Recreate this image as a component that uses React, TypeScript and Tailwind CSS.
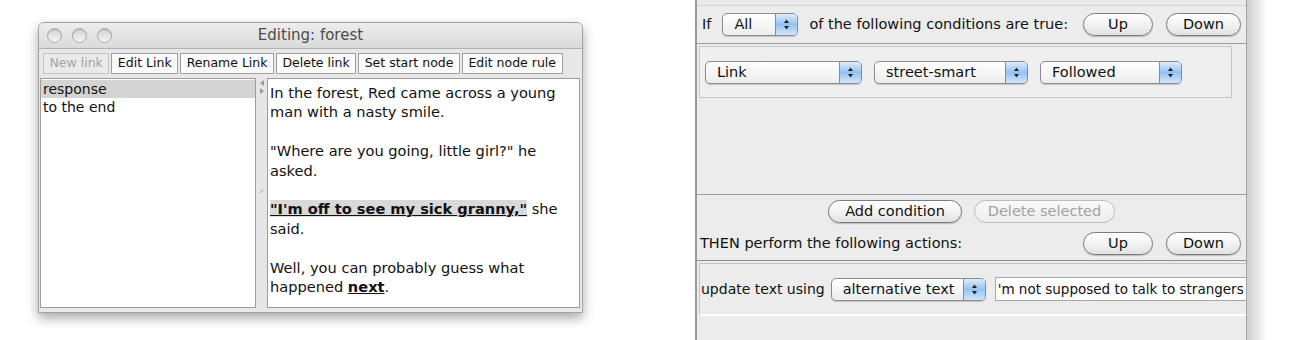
import React from 'react';

const font = "font-['DejaVu_Sans',sans-serif]";

function Light() {
  return (
    <div className="w-[15px] h-[15px] rounded-full border border-[#a9a9a9] bg-gradient-to-b from-[#cfcfcf] via-[#e6e6e6] to-[#f4f4f4] shadow-[inset_0_1px_1px_rgba(0,0,0,0.15)]" />
  );
}

function ToolButton({ label, disabled }: { label: string; disabled?: boolean }) {
  return (
    <div
      className={
        'h-[21px] px-[5.5px] flex items-center border text-[12.5px] leading-none whitespace-nowrap ' +
        (disabled
          ? 'border-[#c4c4c4] bg-[#eaeaea] text-[#a3a3a3]'
          : 'border-[#a0a0a0] bg-[#fbfbfb] text-[#111]')
      }
    >
      {label}
    </div>
  );
}

function AquaSelect({ label, width }: { label: string; width: string }) {
  return (
    <div
      className={
        width +
        ' h-[23px] shrink-0 flex rounded-[5px] border border-[#8c8c8c] bg-gradient-to-b from-white to-[#ececec] shadow-[0_1px_1px_rgba(0,0,0,0.18)]'
      }
    >
      <div className="flex-1 pl-[11px] flex items-center text-[14.5px] text-[#111] leading-none whitespace-nowrap">{label}</div>
      <div className="w-[22px] rounded-r-[4px] border-l border-[#8c8c8c] bg-gradient-to-b from-[#dcecfb] via-[#95c2f1] to-[#cfe6fc] flex flex-col items-center justify-center">
        <svg width="7" height="11" viewBox="0 0 7 11">
          <path d="M3.5 0.5 L6 4 L1 4 Z" fill="#222" />
          <path d="M3.5 10.5 L6 7 L1 7 Z" fill="#222" />
        </svg>
      </div>
    </div>
  );
}

function Pill({ label, width, disabled }: { label: string; width: string; disabled?: boolean }) {
  return (
    <div
      className={
        width +
        ' h-[23px] shrink-0 rounded-full border flex items-center justify-center text-[14.5px] leading-none whitespace-nowrap ' +
        (disabled
          ? 'border-[#bdbdbd] bg-gradient-to-b from-[#fafafa] to-[#ececec] text-[#a2a2a2]'
          : 'border-[#7b7b7b] bg-gradient-to-b from-white via-[#f3f3f3] to-[#e2e2e2] text-[#111] shadow-[0_1px_1px_rgba(0,0,0,0.2)]')
      }
    >
      {label}
    </div>
  );
}

function EditorWindow() {
  return (
    <div className="w-[545px] h-[291px] mt-[22px] ml-[38px] shrink-0 flex flex-col rounded-t-[6px] border border-[#a2a2a2] bg-[#e8e8e8] shadow-[0_5px_12px_rgba(0,0,0,0.35)] overflow-hidden">
      {/* title bar */}
      <div className="h-[26px] shrink-0 grid grid-cols-[1fr_auto_1fr] items-center bg-gradient-to-b from-[#ededed] to-[#dadada] border-b border-[#b2b2b2]">
        <div className="flex items-center gap-[10px] pl-[8px]">
          <Light />
          <Light />
          <Light />
        </div>
        <div className="text-[15px] text-[#4c4c4c] leading-none">Editing: forest</div>
        <div />
      </div>

      {/* toolbar */}
      <div className="h-[28px] shrink-0 flex items-center gap-[2px] pl-[4px] pt-[1px]">
        <ToolButton label="New link" disabled />
        <ToolButton label="Edit Link" />
        <ToolButton label="Rename Link" />
        <ToolButton label="Delete link" />
        <ToolButton label="Set start node" />
        <ToolButton label="Edit node rule" />
      </div>

      {/* split pane */}
      <div className="flex-1 flex pl-[1px] pr-[2px] pb-[4px] pt-[1px] min-h-0">
        <div className="w-[216px] shrink-0 bg-white border border-[#9c9c9c] pt-[1px] text-[14px] text-[#111]">
          <div className="h-[18px] pl-[2px] flex items-center bg-[#d4d4d4]">response</div>
          <div className="h-[18px] pl-[2px] flex items-center">to the end</div>
        </div>
        <div className="w-[11px] shrink-0 flex flex-col items-center pt-[1px] bg-[#e6e6e6]">
          <svg width="6" height="16" viewBox="0 0 6 16">
            <path d="M5 1 L1 4 L5 7 Z" fill="#9a9a9a" />
            <path d="M1 9 L5 12 L1 15 Z" fill="#9a9a9a" />
          </svg>
          <svg width="5" height="5" viewBox="0 0 5 5" className="mt-[94px]">
            <path d="M4 0.5 L1 4" stroke="#9a9a9a" strokeWidth="1" />
          </svg>
        </div>
        <div className="flex-1 bg-white border border-[#9c9c9c] pl-[2px] pt-[4px] text-[14.6px] leading-[19.4px] text-[#111]">
          <div>In the forest, Red came across a young</div>
          <div className="mb-[19.4px]">man with a nasty smile.</div>
          <div>"Where are you going, little girl?" he</div>
          <div className="mb-[19.4px]">asked.</div>
          <div>
            <span className="font-bold underline bg-[#d9d9d9]">"I'm off to see my sick granny,"</span> she
          </div>
          <div className="mb-[19.4px]">said.</div>
          <div>Well, you can probably guess what</div>
          <div>
            happened <span className="font-bold underline">next</span>.
          </div>
        </div>
      </div>
    </div>
  );
}

function RuleWindow() {
  return (
    <div className="ml-[112px] shrink-0 flex">
      <div className="w-[552px] h-[340px] flex flex-col bg-[#ececec] border-l-2 border-r border-l-[#9a9a9a] border-r-[#a5a5a5] text-[#111] overflow-hidden">
        <div className="h-[6px] shrink-0 border-b border-[#d4d4d4] bg-[#eaeaea]" />

        {/* IF row */}
        <div className="h-[37px] shrink-0 flex items-center pl-[5px] pr-[5px]">
          <span className="text-[14.5px]">If</span>
          <div className="ml-[11px]">
            <AquaSelect label="All" width="w-[76px]" />
          </div>
          <span className="ml-[11px] text-[14.5px] whitespace-nowrap">of the following conditions are true:</span>
          <div className="flex-1" />
          <Pill label="Up" width="w-[70px]" />
          <div className="w-[13px]" />
          <Pill label="Down" width="w-[75px]" />
        </div>

        {/* conditions */}
        <div className="h-[152px] shrink-0 border-y border-[#9c9c9c] pt-[2px] pl-[2px] pr-[14px]">
          <div className="h-[52px] border border-[#c6c6c6] bg-[#efefef] flex items-center gap-[12px] pl-[5px]">
            <AquaSelect label="Link" width="w-[157px]" />
            <AquaSelect label="street-smart" width="w-[154px]" />
            <AquaSelect label="Followed" width="w-[142px]" />
          </div>
        </div>

        <div className="h-[32px] shrink-0 flex items-center justify-center gap-[12px]">
          <Pill label="Add condition" width="w-[134px]" />
          <Pill label="Delete selected" width="w-[141px]" disabled />
        </div>

        {/* THEN row */}
        <div className="h-[33px] shrink-0 flex items-center pl-[3px] pr-[5px]">
          <span className="text-[14.5px] whitespace-nowrap">THEN perform the following actions:</span>
          <div className="flex-1" />
          <Pill label="Up" width="w-[70px]" />
          <div className="w-[13px]" />
          <Pill label="Down" width="w-[75px]" />
        </div>

        {/* actions */}
        <div className="h-[56px] shrink-0 border-t border-[#8f8f8f] pt-[2px] pl-[2px]">
          <div className="h-[53px] border-t border-l border-[#c2c2c2] border-b-2 border-b-white flex items-center overflow-hidden">
            <span className="text-[14px] pl-[1px] whitespace-nowrap shrink-0">update text using</span>
            <div className="ml-[6px]">
              <AquaSelect label="alternative text" width="w-[155px]" />
            </div>
            <div className="ml-[9px] w-[256px] h-[24px] shrink-0 bg-white border border-[#a8a8a8] flex items-center pl-[2px] text-[13.5px] whitespace-nowrap overflow-hidden">
              'm not supposed to talk to strangers
            </div>
          </div>
        </div>
        <div className="flex-1" />
      </div>
      <div className="w-[20px] h-[340px] bg-gradient-to-r from-[#cdcdcd] to-white" />
    </div>
  );
}

export default function App() {
  return (
    <div className={'w-[1303px] h-[340px] bg-white flex items-start overflow-hidden ' + font}>
      <EditorWindow />
      <RuleWindow />
    </div>
  );
}
